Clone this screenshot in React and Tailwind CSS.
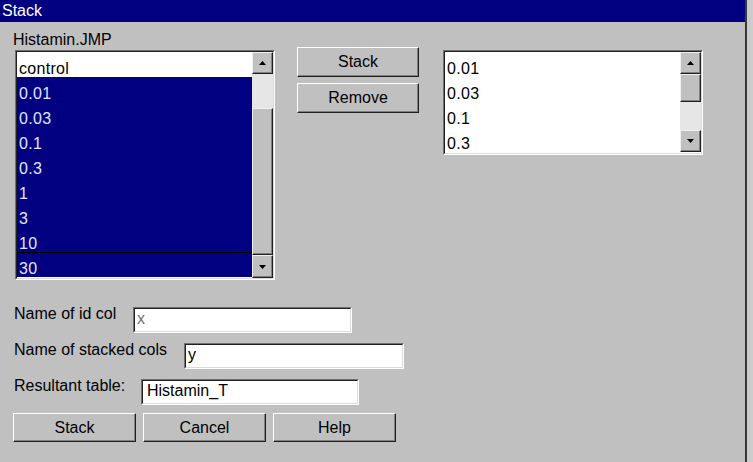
const font = { fontFamily: '"Liberation Sans", Arial, sans-serif' };

function Arrow({ dir }) {
  return (
    <svg width="7" height="4" viewBox="0 0 7 4">
      {dir === "up" ? (
        <polygon points="3.5,0 7,4 0,4" fill="#000" />
      ) : (
        <polygon points="0,0 7,0 3.5,4" fill="#000" />
      )}
    </svg>
  );
}

function ScrollBtn({ dir, h }) {
  return (
    <div
      className={`${h} flex items-center justify-center bg-[#c0c0c0] border border-t-[#f0f0f0] border-l-[#f0f0f0] border-r-[#202020] border-b-[#202020] shadow-[inset_-1px_-1px_0_#808080]`}
    >
      <Arrow dir={dir} />
    </div>
  );
}

function Thumb({ h }) {
  return (
    <div
      className={`${h} bg-[#c0c0c0] border border-t-[#f0f0f0] border-l-[#f0f0f0] border-r-[#202020] border-b-[#202020] shadow-[inset_-1px_-1px_0_#808080]`}
    />
  );
}

function Button({ children, w, h }) {
  return (
    <div
      className={`${w} ${h} flex items-center justify-center bg-[#c0c0c0] text-[16px] leading-[16px] text-black border border-t-white border-l-white border-r-[#202020] border-b-[#202020] shadow-[inset_-1px_-1px_0_#808080]`}
    >
      {children}
    </div>
  );
}

function Sunken({ className, children }) {
  return (
    <div className={`border border-t-[#707070] border-l-[#707070] border-r-white border-b-white ${className}`}>
      <div className="w-full h-full border border-t-[#202020] border-l-[#202020] border-r-[#dcdcdc] border-b-[#dcdcdc] bg-white overflow-hidden">
        {children}
      </div>
    </div>
  );
}

function Row({ text, selected, focus }) {
  return (
    <div
      className={`h-[25px] pl-[2px] text-[16px] leading-[17px] tracking-[0.3px] ${
        focus ? "border-t border-black pt-[7px]" : "pt-[8px]"
      } ${selected ? "bg-[#000080] text-[#e4e4ff]" : "bg-white text-black"}`}
    >
      {text}
    </div>
  );
}

function TextField({ w, value, pad, gray }) {
  return (
    <Sunken className={`${w} h-[26px] mt-[1px]`}>
      <div
        className={`${pad} pt-[2px] text-[16px] leading-[16px] ${gray ? "text-[#707070]" : "text-black"}`}
      >
        {value}
      </div>
    </Sunken>
  );
}

export default function App() {
  const leftItems = ["0.01", "0.03", "0.1", "0.3", "1", "3", "10"];
  const rightItems = ["0.01", "0.03", "0.1", "0.3"];

  return (
    <div className="w-[753px] h-[462px] flex bg-[#cccccc] overflow-hidden" style={font}>
      <div className="w-[745px] h-full flex flex-col bg-[#c0c0c0]">
        {/* title bar */}
        <div className="h-[22px] bg-[#000080] text-white text-[16px] leading-[16px] pt-[3px] pl-[2px]">
          Stack
        </div>

        {/* top area */}
        <div className="flex items-start pl-[15px]">
          <div className="flex flex-col mt-[10px]">
            <div className="text-[16px] leading-[16px] text-black -ml-[2px]">Histamin.JMP</div>
            <Sunken className="w-[260px] h-[230px] mt-[2px]">
              <div className="flex h-full">
                <div className="flex-1 flex flex-col">
                  <Row text="control" />
                  {leftItems.map((t) => (
                    <Row key={t} text={t} selected />
                  ))}
                  <Row text="30" selected focus />
                </div>
                <div className="w-[21px] flex flex-col">
                  <ScrollBtn dir="up" h="h-[22px]" />
                  <div className="h-[34px] bg-[#e6e6e6]" />
                  <Thumb h="h-[147px]" />
                  <ScrollBtn dir="down" h="h-[23px]" />
                </div>
              </div>
            </Sunken>
          </div>

          <div className="flex flex-col gap-[6px] ml-[22px] mt-[25px]">
            <Button w="w-[122px]" h="h-[30px]">Stack</Button>
            <Button w="w-[122px]" h="h-[30px]">Remove</Button>
          </div>

          <Sunken className="w-[260px] h-[105px] ml-[24px] mt-[28px]">
            <div className="flex h-full">
              <div className="flex-1 flex flex-col">
                {rightItems.map((t) => (
                  <Row key={t} text={t} />
                ))}
              </div>
              <div className="w-[21px] flex flex-col">
                <ScrollBtn dir="up" h="h-[22px]" />
                <Thumb h="h-[28px]" />
                <div className="h-[28px] bg-[#e6e6e6]" />
                <ScrollBtn dir="down" h="h-[22px]" />
              </div>
            </div>
          </Sunken>
        </div>

        {/* fields */}
        <div className="flex flex-col pl-[14px] mt-[26px] text-[16px] leading-[16px] text-black">
          <div className="h-[36px] flex items-start">
            <div className="w-[119px]">Name of id col</div>
            <TextField w="w-[219px]" value="x" pad="pl-[2px]" gray />
          </div>
          <div className="h-[36px] flex items-start">
            <div className="w-[170px]">Name of stacked cols</div>
            <TextField w="w-[220px]" value="y" pad="pl-[2px]" />
          </div>
          <div className="h-[35px] flex items-start">
            <div className="w-[127px]">Resultant table:</div>
            <TextField w="w-[218px]" value="Histamin_T" pad="pl-[4px]" />
          </div>
          <div className="flex gap-[7px] -ml-[1px]">
            <Button w="w-[123px]" h="h-[29px]">Stack</Button>
            <Button w="w-[123px]" h="h-[29px]">Cancel</Button>
            <Button w="w-[123px]" h="h-[29px]">Help</Button>
          </div>
        </div>
      </div>
      <div className="w-[2px] h-full bg-[#3a3a3a]" />
    </div>
  );
}
